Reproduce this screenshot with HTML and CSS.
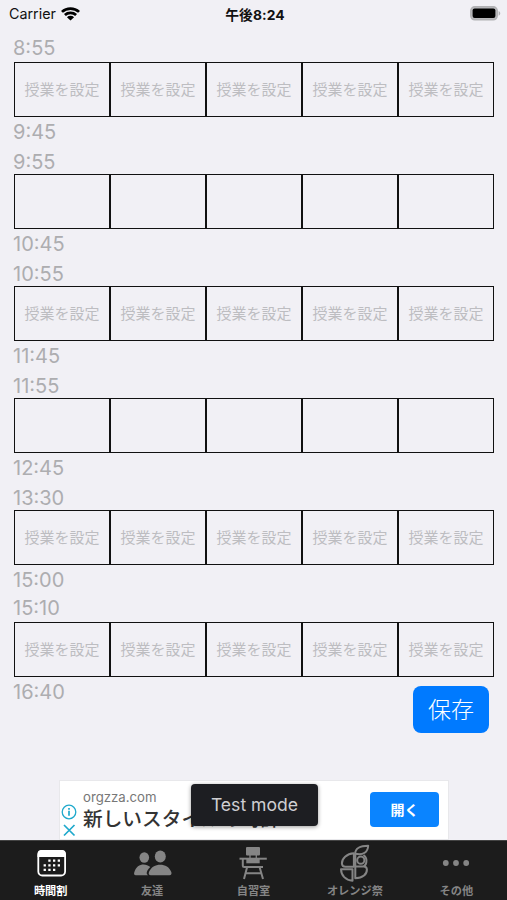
FILE: index.html
```html
<!DOCTYPE html>
<html lang="ja">
<head>
    <meta charset="UTF-8">
    <meta name="viewport" content="width=device-width, initial-scale=1.0">
    <title>時間割</title>
    <link rel="stylesheet" href="styles.css">
</head>
<body>
    <header class="status-bar">
        <div class="carrier">
            <span>Carrier</span>
            <svg width="19" height="14" viewBox="0 0 18 14" preserveAspectRatio="none">
                <path d="M.9 4.900a11.600 11.600 0 0 1 16.200 0M3.700 8a7.700 7.700 0 0 1 10.600 0" fill="none" stroke="#000" stroke-width="2.600"/>
                <path d="M5.600 10.200a4.800 4.800 0 0 1 6.800 0L9 13.600z"/>
            </svg>
        </div>
        <div class="clock">午後8:24</div>
        <div class="battery">
            <svg width="31" height="15" viewBox="0 0 31 15">
                <rect x=".8" y=".8" width="26.4" height="13" rx="4" fill="#b9b9bc" stroke="#b1b1b4" stroke-width="1.5"/>
                <rect x="2.6" y="2.5" width="22.8" height="9.6" rx="2"/>
                <path d="M28.6 5v4.8c2.2-.9 2.2-3.9 0-4.8z" fill="#b1b1b4"/>
            </svg>
        </div>
    </header>

    <main class="timetable">
        <section class="period early">
            <div class="start">8:55</div>
            <div class="cells"><div>授業を設定</div><div>授業を設定</div><div>授業を設定</div><div>授業を設定</div><div>授業を設定</div></div>
            <div class="end">9:45</div>
        </section>
        <section class="period">
            <div class="start">9:55</div>
            <div class="cells"><div></div><div></div><div></div><div></div><div></div></div>
            <div class="end">10:45</div>
        </section>
        <section class="period">
            <div class="start">10:55</div>
            <div class="cells"><div>授業を設定</div><div>授業を設定</div><div>授業を設定</div><div>授業を設定</div><div>授業を設定</div></div>
            <div class="end">11:45</div>
        </section>
        <section class="period">
            <div class="start">11:55</div>
            <div class="cells"><div></div><div></div><div></div><div></div><div></div></div>
            <div class="end">12:45</div>
        </section>
        <section class="period">
            <div class="start">13:30</div>
            <div class="cells"><div>授業を設定</div><div>授業を設定</div><div>授業を設定</div><div>授業を設定</div><div>授業を設定</div></div>
            <div class="end">15:00</div>
        </section>
        <section class="period early">
            <div class="start">15:10</div>
            <div class="cells"><div>授業を設定</div><div>授業を設定</div><div>授業を設定</div><div>授業を設定</div><div>授業を設定</div></div>
            <div class="bottom-row">
                <div class="end">16:40</div>
                <button class="save-button">保存</button>
            </div>
        </section>
    </main>

    <div class="ad">
        <div class="ad-marks">
            <svg width="16" height="16" viewBox="0 0 16 16" fill="none" stroke="#1fa9cc" stroke-width="1.3">
                <circle cx="8" cy="8" r="6.8"/>
                <path d="M8 6.8v5M8 4v1.7" stroke-width="1.7"/>
            </svg>
            <svg width="16" height="16" viewBox="0 0 16 16" fill="none" stroke="#1fa9cc" stroke-width="1.7">
                <path d="M3 3l10.5 10.5M13.5 3L3 13.5"/>
            </svg>
        </div>
        <div class="ad-text">
            <div class="ad-domain">orgzza.com</div>
            <div class="ad-title">新しいスタイルの時計</div>
        </div>
        <button class="ad-button">開く</button>
        <div class="toast">Test mode</div>
    </div>

    <nav class="tab-bar">
        <a class="tab active">
            <svg width="40" height="40" viewBox="0 0 40 40">
                <rect x="7.300" y="9.900" width="26.800" height="24.600" rx="4" fill="none" stroke="#fff" stroke-width="1.8"/>
                <path d="M6.500 16v-3a4 4 0 0 1 4-4h20.400a4 4 0 0 1 4 4v3z" fill="#fff"/>
                <g fill="#fff">
                    <path d="M17.300 18.500h2.3v2.3h-2.3zM22 18.500h2.3v2.3h-2.3zM26.700 18.500h2.3v2.3h-2.3z"/>
                    <path d="M12.600 23.200h2.3v2.3h-2.3zM17.300 23.200h2.3v2.3h-2.3zM22 23.200h2.3v2.3h-2.3zM26.700 23.200h2.3v2.3h-2.3z"/>
                    <path d="M12.600 27.700h2.3v2.3h-2.3zM17.300 27.700h2.3v2.3h-2.3zM22 27.700h2.3v2.3h-2.3z"/>
                </g>
            </svg>
            <span>時間割</span>
        </a>
        <a class="tab">
            <svg width="40" height="40" viewBox="0 0 40 40" fill="#858585">
                <ellipse cx="12.300" cy="16.500" rx="4.800" ry="5.200"/>
                <ellipse cx="28.300" cy="15.500" rx="5.500" ry="6"/>
                <path d="M16 34.300H3.800c-1.800 0-2-1.500-1.500-3 2.400-8.700 11-9.600 16-5.200-2.500 2.100-4 4.600-3.500 7z"/>
                <path d="M18.800 34.300c-1.900 0-2.500-1.600-1.800-3.200 3.600-9.800 19-9.800 22.300 0 .6 1.800 0 3.200-1.800 3.200z"/>
            </svg>
            <span>友達</span>
        </a>
        <a class="tab">
            <svg width="40" height="40" viewBox="0 0 40 40" fill="none" stroke="#858585" stroke-width="2">
                <rect x="13" y="6" width="14" height="8.600" rx="1" fill="#858585" stroke="none"/>
                <path d="M17 14v3M23.300 14v3" stroke-width="1.300"/>
                <path d="M6.500 17.700h27.300"/>
                <path d="M13.300 18h13.400v4.300H13.300z" fill="#858585" stroke="none"/>
                <path d="M9.800 18v6.500q0 1.500 1.500 1.500H30M14 26.500L11 38M26.700 26.500L30 38M12.500 32.300h16"/>
            </svg>
            <span>自習室</span>
        </a>
        <a class="tab">
            <svg width="40" height="40" viewBox="0 0 40 40" fill="none" stroke="#858585" stroke-width="2" stroke-linejoin="round">
                <path d="M20.300 12.800C20 7.500 25 4.700 33.200 4.700 32.800 11 28.500 14.500 20.300 12.800z"/>
                <path d="M18.900 12.300C11.500 12.800 6.800 17.500 6.900 22.500c.1 2 1.300 3.300 3.500 3.300h8.500z"/>
                <circle cx="25.800" cy="19.200" r="3.600"/>
                <path d="M20.300 13v24.300C28 37.300 32 33 31.900 28.500c-.1-2-1.300-3-3.200-3h-8.400M28.500 14c2.500 2 3.500 4.500 2.800 7.500-.4 2-1.300 3.500-2.800 4"/>
                <path d="M6 28.200h11.500v11.500C10.500 39.300 6.200 34.500 6 28.200z"/>
            </svg>
            <span>オレンジ祭</span>
        </a>
        <a class="tab">
            <svg width="40" height="40" viewBox="0 0 40 40" fill="#858585">
                <circle cx="9.800" cy="22" r="2.900"/>
                <circle cx="20" cy="22" r="2.900"/>
                <circle cx="30.200" cy="22" r="2.900"/>
            </svg>
            <span>その他</span>
        </a>
    </nav>
</body>
</html>
```
FILE: styles.css
```css
* {
    box-sizing: border-box;
}

body {
    margin: 0;
    height: 900px;
    display: flex;
    flex-direction: column;
    overflow: hidden;
    background-color: #f1f0f5;
    font-family: Inter, "Noto Sans CJK JP", sans-serif;
}

button {
    border: none;
    padding: 0;
    font-family: inherit;
    color: #fff;
}

svg {
    display: block;
}

/* Status bar */
.status-bar {
    display: grid;
    grid-template-columns: 1fr auto 1fr;
    align-items: center;
    height: 33px;
    padding: 0 6px 6px 9px;
    font-size: 14.3px;
    color: #111;
}

.carrier {
    display: flex;
    align-items: center;
    gap: 5px;
}

.clock {
    font-size: 13.8px;
    font-weight: 700;
    letter-spacing: 0.1px;
}

.battery {
    justify-self: end;
}

/* Timetable */
.timetable {
    height: 747px;
    padding-left: 14px;
    width: 494px;
}

.period {
    height: 112px;
}

.start,
.end {
    margin-left: -1px;
    font-size: 20px;
    font-weight: 400;
    color: #adadb0;
}

.start {
    height: 29px;
    line-height: 34px;
}

.early .start {
    line-height: 30px;
}

.end {
    line-height: 30px;
}

.cells {
    display: grid;
    grid-template-columns: repeat(5, 96px);
    height: 55px;
}

.cells div {
    display: flex;
    align-items: center;
    justify-content: center;
    padding-bottom: 2px;
    border: 1px solid #111;
    font-size: 15px;
    color: #bdbdc1;
}

.bottom-row {
    display: flex;
    justify-content: space-between;
}

.save-button {
    width: 76px;
    height: 47px;
    margin: 9px 5px 0 0;
    padding-bottom: 3px;
    border-radius: 8px;
    background-color: #007aff;
    font-size: 23px;
    font-weight: 300;
}

/* Ad banner */
.ad {
    position: relative;
    display: flex;
    width: 390px;
    height: 60px;
    margin-left: 59px;
    background-color: #fff;
    border: 1px solid #e8e8eb;
}

.ad-marks {
    display: flex;
    flex-direction: column;
    gap: 2px;
    width: 23px;
    padding: 23px 0 0 1px;
}

.ad-text {
    flex: 1;
    white-space: nowrap;
}

.ad-domain {
    padding-top: 6px;
    font-size: 13.2px;
    line-height: 20px;
    color: #777;
}

.ad-title {
    font-size: 19.7px;
    font-weight: 500;
    line-height: 25px;
    color: #333;
}

.ad-button {
    width: 69px;
    height: 35px;
    margin: 11px 9px 0 0;
    padding-bottom: 2px;
    border-radius: 4px;
    background-color: #0a84ff;
    font-size: 14px;
    font-weight: 700;
}

.toast {
    position: absolute;
    left: 131px;
    top: 3px;
    width: 127px;
    height: 42px;
    border-radius: 4px;
    background-color: #1d1e22;
    box-shadow: 0 1px 4px rgba(0, 0, 0, 0.4);
    color: #cfcfd2;
    font-size: 17.6px;
    line-height: 42px;
    text-align: center;
}

/* Tab bar */
.tab-bar {
    display: grid;
    grid-template-columns: repeat(5, 1fr);
    height: 60px;
    background-color: #1c1c1c;
    border-top: 1px solid #444;
}

.tab {
    display: flex;
    flex-direction: column;
    align-items: center;
    color: #858585;
    font-size: 11.2px;
    font-weight: 700;
    line-height: 20px;
}

.tab svg {
    overflow: visible;
}

.tab.active {
    color: #fff;
}
```
